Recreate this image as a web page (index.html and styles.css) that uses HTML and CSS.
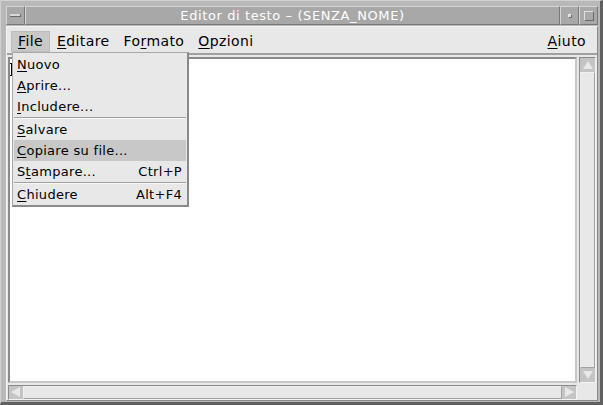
FILE: index.html
```html
<!DOCTYPE html>
<html>
<head>
<meta charset="utf-8">
<link rel="stylesheet" href="styles.css">
</head>
<body>
<div class="win">
  <div class="titlebar">
    <div class="tbtn wmenu"><span class="bar"></span></div>
    <div class="title">Editor di testo – (SENZA_NOME)</div>
    <div class="tbtn min"><span class="dot"></span></div>
    <div class="tbtn max"><span class="sq"></span></div>
  </div>
  <div class="client">
    <div class="menubar">
      <span class="mitem active"><u>F</u>ile</span>
      <span class="mitem"><u>E</u>ditare</span>
      <span class="mitem">Fo<u>r</u>mato</span>
      <span class="mitem"><u>O</u>pzioni</span>
      <span class="spacer"></span>
      <span class="mitem"><u>A</u>iuto</span>
    </div>
    <div class="work">
      <div class="text"><span class="cursor"></span></div>
      <div class="vscroll">
        <span class="arrow up"></span>
        <span class="track"></span>
        <span class="arrow down"></span>
      </div>
      <div class="hscroll">
        <span class="arrow left"></span>
        <span class="track"></span>
        <span class="arrow right"></span>
      </div>
      <div class="corner"></div>
    </div>
  </div>
  <div class="dropdown">
    <div class="ditem"><span><u>N</u>uovo</span></div>
    <div class="ditem"><span><u>A</u>prire...</span></div>
    <div class="ditem"><span><u>I</u>ncludere...</span></div>
    <div class="sep"></div>
    <div class="ditem"><span><u>S</u>alvare</span></div>
    <div class="ditem hl"><span><u>C</u>opiare su file...</span></div>
    <div class="ditem"><span>S<u>t</u>ampare...</span><span>Ctrl+P</span></div>
    <div class="sep"></div>
    <div class="ditem"><span><u>C</u>hiudere</span><span>Alt+F4</span></div>
  </div>
</div>
</body>
</html>
```
FILE: styles.css
```css
html, body { margin: 0; padding: 0; background: #b8b8b8; }
body { font-family: "DejaVu Sans", sans-serif; font-size: 13px; color: #000; }
u { text-decoration: underline; text-underline-offset: 2px; }

.win {
  position: relative;
  width: 603px; height: 405px; box-sizing: border-box;
  background: #b8b8b8;
  border-top: 1px solid #d0d0d0; border-left: 1px solid #d0d0d0;
  border-right: 3px solid #606060; border-bottom: 3px solid #606060;
  padding: 5px 2px 1px 5px;
  display: flex; flex-direction: column;
}

.titlebar { height: 19px; display: flex; margin-bottom: 1px; }
.tbtn {
  width: 17px; height: 17px; background: #a8a8a8;
  border-top: 1px solid #d4d4d4; border-left: 1px solid #d4d4d4;
  border-right: 1px solid #787878; border-bottom: 1px solid #787878;
  display: flex; align-items: center; justify-content: center;
}
.wmenu .bar { width: 10px; height: 2px; background: #d8d8d8; border-bottom: 1px solid #6a6a6a; border-right: 1px solid #6a6a6a; }
.min .dot { width: 2px; height: 2px; background: #d8d8d8; border-bottom: 1px solid #6a6a6a; border-right: 1px solid #6a6a6a; border-top: 1px solid #e8e8e8; border-left: 1px solid #e8e8e8; }
.max .sq { width: 8px; height: 8px; border-top: 1px solid #e0e0e0; border-left: 1px solid #e0e0e0; border-right: 1px solid #6a6a6a; border-bottom: 1px solid #6a6a6a; }
.title {
  flex: 1; background: #a8a8a8; color: #fff; text-align: center;
  line-height: 17px; letter-spacing: 0.6px;
  border-top: 1px solid #d4d4d4; border-left: 1px solid #d4d4d4;
  border-right: 1px solid #787878; border-bottom: 1px solid #787878;
}

.client {
  flex: 1; background: #e8e8e8; display: flex; flex-direction: column;
  border-top: 1px solid #f4f4f4; border-left: 1px solid #f4f4f4;
  border-right: 1px solid #8a8a8a; border-bottom: 1px solid #8a8a8a;
}
.menubar {
  height: 24px; display: flex; align-items: center; padding: 2px 4px 0 4px;
  border-bottom: 2px solid #a0a0a0;
  font-size: 14px; letter-spacing: 0.4px;
}
.mitem { padding: 2px 6px 2px 6px; line-height: 15px; border: 1px solid transparent; }
.mitem.active { background: #c8c8c8; border-color: #bcbcbc; }
.spacer { flex: 1; }

.work {
  flex: 1; display: grid; grid-template-columns: 1fr 17px; grid-template-rows: 1fr 15px;
  gap: 2px; padding: 2px 1px 0 1px;
}
.text {
  position: relative; background: #fff;
  border-top: 2px solid #8a8a8a; border-left: 2px solid #8a8a8a;
  border-right: 2px solid #c8c8c8; border-bottom: 2px solid #c8c8c8;
}
.cursor { position: absolute; left: 1px; top: 4px; width: 1px; height: 13px; background: #000; }
.cursor::before, .cursor::after { content: ""; position: absolute; left: -1px; width: 3px; height: 1px; background: #000; }
.cursor::before { top: 0; } .cursor::after { bottom: 0; }

.vscroll, .hscroll {
  display: flex; background: #d0d0d0;
  border-top: 1px solid #8a8a8a; border-left: 1px solid #8a8a8a;
  border-right: 1px solid #f4f4f4; border-bottom: 1px solid #f4f4f4;
}
.vscroll { flex-direction: column; }
.track { flex: 1; background: #e8e8e8; border: 1px solid #a0a0a0; border-top-color: #f0f0f0; border-left-color: #f0f0f0; }
.arrow { position: relative; background: #c4c4c4; flex: none; }
.vscroll .arrow { height: 14px; }
.hscroll .arrow { width: 14px; }
.arrow::after { content: ""; position: absolute; width: 0; height: 0; }
.arrow.up::after { left: 3px; top: 3px; border-left: 5px solid transparent; border-right: 5px solid transparent; border-bottom: 8px solid #e8e8e8; }
.arrow.down::after { left: 3px; top: 3px; border-left: 5px solid transparent; border-right: 5px solid transparent; border-top: 8px solid #e8e8e8; }
.arrow.left::after { left: 2px; top: 1px; border-top: 5px solid transparent; border-bottom: 5px solid transparent; border-right: 9px solid #e8e8e8; }
.arrow.right::after { left: 3px; top: 1px; border-top: 5px solid transparent; border-bottom: 5px solid transparent; border-left: 9px solid #e8e8e8; }
.corner { background: #e8e8e8; }

.dropdown {
  position: absolute; left: 11px; top: 51px; width: 172px;
  background: #e8e8e8;
  border-top: 1px solid #a8a8a8; border-left: 1px solid #a8a8a8;
  border-right: 2px solid #8a8a8a; border-bottom: 2px solid #8a8a8a;
  padding: 1px 1px 0 1px;
  letter-spacing: 0.3px;
}
.ditem { height: 21px; line-height: 21px; display: flex; justify-content: space-between; padding: 0 4px 0 3px; }
.ditem.hl { background: #c8c8c8; }
.sep { height: 1px; border-top: 1px solid #a0a0a0; background: #f8f8f8; }
```
